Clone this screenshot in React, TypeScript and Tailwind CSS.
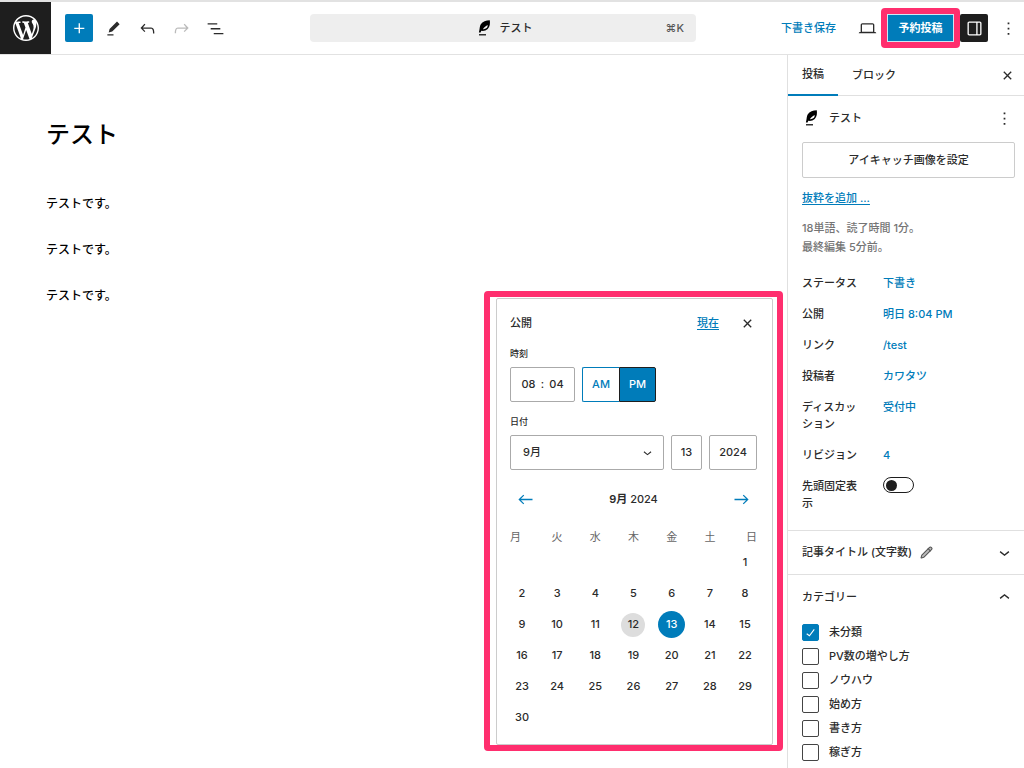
import React, { useState } from 'react'
import { Pencil } from 'lucide-react'

const PATHS = {
  plus: 'M11 12.5V17.5H12.5V12.5H17.5V11H12.5V6H11V11H6V12.5H11Z',
  edit: 'm19 7-3-3-8.5 8.5-1 4 4-1L19 7Zm-7 11.5H5V20h7v-1.5Z',
  undo: 'M18.3 11.7c-.6-.6-1.4-.9-2.3-.9H6.7l2.9-3.3-1.1-1-4.5 5L8.5 16l1-1-2.7-2.7H16c.5 0 .9.2 1.3.5 1 1 1 3.4 1 4.5v.3h1.5v-.2c0-1.5 0-4.3-1.5-5.7z',
  redo: 'M15.6 6.5l-1.1 1 2.9 3.3H8c-.9 0-1.7.3-2.3.9-1.4 1.5-1.4 4.2-1.4 5.6v.2h1.5v-.3c0-1.1 0-3.5 1-4.5.3-.3.7-.5 1.3-.5h9.2L14.5 15l1.1 1.1 4.6-4.6-4.6-5z',
  list: 'M3 6h11v1.5H3V6Zm3.5 5.5h11V13h-11v-1.5ZM21 17H10v1.5h11V17Z',
  desktop: 'M20.5 16h-.7V8c0-1.1-.9-2-2-2H6.2c-1.1 0-2 .9-2 2v8h-.7c-.8 0-1.5.7-1.5 1.5h20c0-.8-.7-1.5-1.5-1.5zM5.7 8c0-.3.2-.5.5-.5h11.6c.3 0 .5.2.5.5v7.6H5.7V8z',
  drawer: 'M18 4H6c-1.1 0-2 .9-2 2v12c0 1.1.9 2 2 2h12c1.1 0 2-.9 2-2V6c0-1.1-.9-2-2-2zm-4 14.5H6c-.3 0-.5-.2-.5-.5V6c0-.3.2-.5.5-.5h8v13zm4.5-.5c0 .3-.2.5-.5.5h-2.5v-13H18c.3 0 .5.2.5.5v12z',
  more: 'M13 19h-2v-2h2v2zm0-6h-2v-2h2v2zm0-6h-2V5h2v2z',
  close: 'M12 13.06l3.712 3.713 1.061-1.06L13.061 12l3.712-3.712-1.06-1.06L12 10.938 8.288 7.227l-1.061 1.06L10.939 12l-3.712 3.712 1.06 1.061L12 13.061z',
  down: 'M17.5 11.6L12 16l-5.5-4.4.9-1.2L12 14l4.5-3.6 1 1.2z',
  up: 'M6.5 12.4L12 8l5.5 4.4-.9 1.2L12 10l-4.5 3.6-1-1.2z',
  left: 'M20 11.2H6.8l3.7-3.7-1-1L3.9 12l5.6 5.5 1-1-3.7-3.7H20z',
  right: 'm14.5 6.5-1 1 3.7 3.7H4v1.6h13.2l-3.7 3.7 1 1 5.6-5.5z',
  check: 'M16.7 7.1l-6.3 8.5-3.3-2.5-.9 1.2 4.5 3.4L17.9 8z',
}

function Icon({ name, size = 21, className = '' }: { name: keyof typeof PATHS; size?: number; className?: string }) {
  return (
    <svg width={size} height={size} viewBox="0 0 24 24" fill="currentColor" className={className} aria-hidden="true">
      <path d={PATHS[name]} />
    </svg>
  )
}

function Feather() {
  return (
    <svg width="14" height="16" viewBox="0 0 14 16" aria-hidden="true" className="shrink-0 text-black">
      <path fill="currentColor" d="M11.8.3C8 .4 4.600 1.700 2.800 4.300 1.600 6.200 1.900 8.300.9 12.600h1.700c.2-.8.5-1.300.8-1.800 1.900.4 4.600-.1 6.300-1.800C12 6.800 12.200 3.400 11.800.3zM9.600 4.900c.2 1.300-.2 2.400-1 3.200-.9.8-2.200 1.200-3.700 1.100 1-1.700 2.500-3.200 4.700-4.300z" />
      <path fill="currentColor" d="M1 14.200h7v1.200H1z" />
    </svg>
  )
}

function WpLogo() {
  return (
    <svg width="26" height="26" viewBox="0 0 20 20" fill="currentColor" aria-hidden="true">
      <path d="M20 10c0-5.51-4.49-10-10-10C4.48 0 0 4.49 0 10c0 5.52 4.48 10 10 10 5.51 0 10-4.48 10-10zM7.78 15.37L4.37 6.22c.55-.02 1.17-.08 1.17-.08.5-.06.44-1.13-.06-1.11 0 0-1.45.11-2.37.11-.18 0-.37 0-.58-.01C4.12 2.69 6.87 1.11 10 1.11c2.33 0 4.45.87 6.05 2.34-.68-.11-1.65.39-1.65 1.58 0 .74.45 1.36.9 2.1.35.61.55 1.36.55 2.46 0 1.49-1.4 5-1.4 5l-3.03-8.37c.54-.02.82-.17.82-.17.5-.05.44-1.25-.06-1.22 0 0-1.44.12-2.38.12-.87 0-2.33-.12-2.33-.12-.5-.03-.56 1.2-.06 1.22l.92.08 1.26 3.41zM17.41 10c.24-.64.74-1.87.43-4.25.7 1.29 1.05 2.71 1.05 4.25 0 3.29-1.73 6.24-4.4 7.78.97-2.59 1.94-5.2 2.92-7.78zM6.1 18.09C3.12 16.65 1.11 13.53 1.11 10c0-1.3.23-2.48.72-3.59C3.25 10.3 4.67 14.2 6.1 18.09zm4.03-6.63l2.58 6.98c-.86.29-1.76.45-2.71.45-.79 0-1.57-.11-2.29-.33.81-2.38 1.62-4.74 2.42-7.1z" />
    </svg>
  )
}

const ICON_BTN = 'flex size-7 items-center justify-center rounded-xs'

function TopBar() {
  return (
    <header className="flex h-[55px] items-center border-t-2 border-b border-[#e2e2e2] bg-white">
      <div className="flex w-[310px] shrink-0 items-center">
        <a href="#" aria-label="WordPress" className="flex h-[52px] w-[51px] items-center justify-center bg-[#1e1e1e] text-white"><WpLogo /></a>
        <div className="ml-3.5 flex gap-1.5">
          <button aria-label="追加" className={`${ICON_BTN} bg-[#007cba] text-white`}><Icon name="plus" /></button>
          <button aria-label="ツール" className={ICON_BTN}><Icon name="edit" /></button>
          <button aria-label="元に戻す" className={ICON_BTN}><Icon name="undo" /></button>
          <button aria-label="やり直す" className={`${ICON_BTN} text-[#bbb]`} disabled><Icon name="redo" /></button>
          <button aria-label="リスト表示" className={ICON_BTN}><Icon name="list" /></button>
        </div>
      </div>
      <button className="flex h-7 min-w-0 flex-1 items-center rounded-sm bg-[#eee] pr-3 pl-4">
        <span className="flex-1" />
        <span className="flex items-center gap-2"><Feather />テスト</span>
        <span className="flex-1 text-right text-[#555]">⌘K</span>
      </button>
      <div className="flex w-[328px] shrink-0 items-center justify-end gap-1.5 pr-0.5">
        <button className="px-[11px] text-[#007cba]">下書き保存</button>
        <button aria-label="表示" className={ICON_BTN}><Icon name="desktop" /></button>
        <div className="relative">
          <button className="h-7 w-[67px] border border-[#cfe6f3] bg-[#007cba] font-bold text-white">予約投稿</button>
          <div className="pointer-events-none absolute -inset-1.5 rounded-sm border-6 border-[#ff2e6e]" />
        </div>
        <button aria-label="設定" className={`${ICON_BTN} bg-[#1e1e1e] text-white`}><Icon name="drawer" /></button>
        <button aria-label="オプション" className={ICON_BTN}><Icon name="more" /></button>
      </div>
    </header>
  )
}

const WEEKDAYS = ['月', '火', '水', '木', '金', '土', '日']
// September 2024 starts on a Sunday, the last column
const WEEKS = Array.from({ length: 6 }, (_, w) => WEEKDAYS.map((_, d) => w * 7 + d - 5))

function SchedulePopover() {
  const [day, setDay] = useState(13)
  const [pm, setPm] = useState(true)

  const dayClass = (d: number) => {
    if (d === day) return 'size-[27px] bg-[#007cba] text-white'
    if (d === 12) return 'size-6 bg-[#ddd]'
    return 'size-6'
  }

  return (
    <div className="absolute top-[236px] right-1 w-[299px] rounded-sm border-6 border-[#ff2e6e] bg-white pt-px pr-1 pl-1.5">
      <div className="rounded-xs border border-[#ccc] pt-3 pr-[15px] pb-[11px] pl-[13px]">
        <div className="flex h-6 items-center">
          <h2 className="flex-1">公開</h2>
          <button className="text-[#007cba] underline underline-offset-2">現在</button>
          <button aria-label="閉じる" className="-mr-0.5 ml-4 flex size-6 items-center justify-center"><Icon name="close" /></button>
        </div>

        <fieldset>
          <legend className="pt-[13px] pb-[7px] text-[9px] leading-3">時刻</legend>
          <div className="flex h-[35px] gap-[7px]">
            <div className="flex w-[65px] items-center justify-center rounded-xs border border-[#aaa]">
              <input aria-label="時" defaultValue="08" className="w-5 text-center outline-none" />
              <span className="w-2 text-center">:</span>
              <input aria-label="分" defaultValue="04" className="w-5 text-center outline-none" />
            </div>
            <div className="flex">
              <button onClick={() => setPm(false)} className={`w-[37px] rounded-l-xs border ${pm ? 'border-r-0 border-[#007cba] text-[#007cba]' : 'border-[#1e1e1e] bg-[#007cba] text-white'}`}>AM</button>
              <button onClick={() => setPm(true)} className={`w-[37px] rounded-r-xs border ${pm ? 'border-[#1e1e1e] bg-[#007cba] text-white' : 'border-l-0 border-[#007cba] text-[#007cba]'}`}>PM</button>
            </div>
          </div>
        </fieldset>

        <fieldset>
          <legend className="pt-3.5 pb-[7px] text-[9px] leading-3">日付</legend>
          <div className="flex h-[35px] gap-[7px]">
            <div className="relative flex-1">
              <select aria-label="月" defaultValue="9月" className="h-full w-full appearance-none rounded-xs border border-[#aaa] px-3 outline-none">
                <option>8月</option>
                <option>9月</option>
                <option>10月</option>
              </select>
              <Icon name="down" size={17} className="pointer-events-none absolute top-[9px] right-2" />
            </div>
            <input aria-label="日" value={day} onChange={e => setDay(Number(e.target.value))} className="w-[31px] rounded-xs border border-[#aaa] text-center outline-none" />
            <input aria-label="年" defaultValue="2024" className="w-12 rounded-xs border border-[#aaa] text-center outline-none" />
          </div>
        </fieldset>

        <div className="mt-[17px] flex h-6 items-center justify-between px-[5px]">
          <button aria-label="前の月" className="text-[#007cba]"><Icon name="left" /></button>
          <h3><strong className="font-semibold">9月</strong> 2024</h3>
          <button aria-label="次の月" className="text-[#007cba]"><Icon name="right" /></button>
        </div>

        <table className="mt-4 w-full table-fixed">
          <colgroup>
            <col className="w-7" />
            <col span={5} />
            <col className="w-7" />
          </colgroup>
          <thead>
            <tr className="h-5">
              {WEEKDAYS.map(d => (
                <th key={d} className="p-0 font-normal text-[#666] first:text-left last:text-right">{d}</th>
              ))}
            </tr>
          </thead>
          <tbody>
            {WEEKS.map((week, i) => (
              <tr key={i} className="h-[31px]">
                {week.map((d, j) => (
                  <td key={j} className="p-0 first:pr-1 last:pl-1">
                    {d > 0 && d <= 30 && (
                      <button onClick={() => setDay(d)} className={`mx-auto flex items-center justify-center rounded-full ${dayClass(d)}`}>{d}</button>
                    )}
                  </td>
                ))}
              </tr>
            ))}
          </tbody>
        </table>
      </div>
    </div>
  )
}

const ROWS = [
  ['ステータス', '下書き'],
  ['公開', '明日 8:04 PM'],
  ['リンク', '/test'],
  ['投稿者', 'カワタツ'],
  ['ディスカッション', '受付中'],
  ['リビジョン', '4'],
]

const CATEGORIES = ['未分類', 'PV数の増やし方', 'ノウハウ', '始め方', '書き方', '稼ぎ方']

function Sidebar() {
  return (
    <aside className="w-[237px] shrink-0 border-l border-[#e0e0e0] bg-white">
      <div className="flex h-[41px] border-b border-[#e0e0e0]">
        <button className="-mb-px border-b-2 border-[#007cba] px-3.5">投稿</button>
        <button className="px-3.5">ブロック</button>
        <button aria-label="閉じる" className="mr-1.5 ml-auto flex w-[21px] items-center justify-center"><Icon name="close" /></button>
      </div>

      <section className="border-b border-[#e0e0e0] pt-2.5 pr-[9px] pb-[18px] pl-3.5">
        <div className="flex h-6 items-center gap-2.5 pl-[3px]">
          <Feather />
          <h2 className="flex-1">テスト</h2>
          <button aria-label="操作"><Icon name="more" /></button>
        </div>
        <button className="mt-3 h-9 w-full rounded-xs border border-[#ccc]">アイキャッチ画像を設定</button>
        <a href="#" className="mt-3 block w-max text-[#007cba] underline underline-offset-2">抜粋を追加 ...</a>
        <p className="mt-3 leading-[19px] text-[#757575]">18単語、読了時間 1分。<br />最終編集 5分前。</p>

        <div className="mt-[18px] grid grid-cols-[65px_1fr] gap-x-4 gap-y-3.5">
          {ROWS.map(([label, value]) => (
            <React.Fragment key={label}>
              <span>{label}</span>
              <a href="#" className="text-[#007cba]">{value}</a>
            </React.Fragment>
          ))}
          <label htmlFor="sticky" className="w-[58px]">先頭固定表示</label>
          <input
            id="sticky"
            type="checkbox"
            role="switch"
            className="-mt-px flex h-4 w-[31px] appearance-none items-center rounded-full border border-[#1e1e1e] px-0.5 before:size-[11px] before:rounded-full before:bg-[#1e1e1e] checked:justify-end"
          />
        </div>
      </section>

      <section className="border-b border-[#e0e0e0]">
        <button className="flex h-[43px] w-full items-center pr-[9px] pl-3.5">
          記事タイトル (文字数)
          <Pencil size={13} strokeWidth={2} className="ml-2 fill-[#bbb] text-[#555]" />
          <Icon name="down" className="ml-auto" />
        </button>
      </section>

      <section className="pb-2">
        <button className="flex h-[45px] w-full items-center pr-[9px] pl-3.5">
          カテゴリー
          <Icon name="up" className="ml-auto" />
        </button>
        <ul className="pl-3.5">
          {CATEGORIES.map((name, i) => (
            <li key={name}>
              <label className="flex h-6 items-center gap-2.5">
                <span className="relative flex">
                  <input type="checkbox" defaultChecked={i === 0} className="peer size-[17px] appearance-none rounded-xs border border-[#444] checked:border-[#007cba] checked:bg-[#007cba]" />
                  <Icon name="check" size={17} className="pointer-events-none absolute inset-0 hidden text-white peer-checked:block" />
                </span>
                {name}
              </label>
            </li>
          ))}
        </ul>
      </section>
    </aside>
  )
}

export default function App() {
  return (
    <div className="flex min-h-screen flex-col bg-white font-['Inter','Noto_Sans_CJK_JP',sans-serif] text-[11px] leading-[17px] font-medium text-[#2b2b2b]">
      <TopBar />
      <div className="flex flex-1">
        <main className="relative flex-1 px-[46px] pt-[62px] text-xs text-black">
          <h1 className="text-2xl leading-9">テスト</h1>
          <div className="mt-[41px] space-y-[26px] leading-5">
            <p>テストです。</p>
            <p>テストです。</p>
            <p>テストです。</p>
          </div>
          <div className="text-[11px] leading-[17px] text-[#2b2b2b]">
            <SchedulePopover />
          </div>
        </main>
        <Sidebar />
      </div>
    </div>
  )
}
